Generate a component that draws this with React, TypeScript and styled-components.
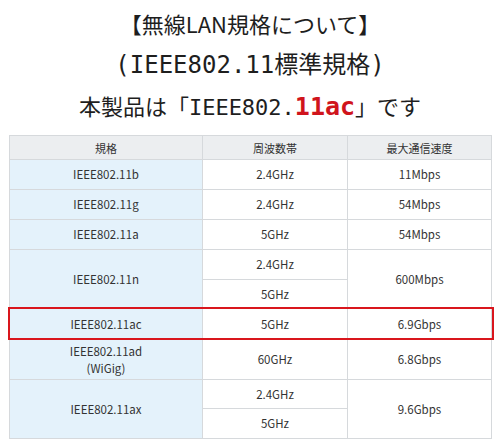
import styled, { createGlobalStyle } from 'styled-components'

const GlobalStyle = createGlobalStyle`
  body {
    margin: 0;
    background: #fff;
    font-family: "Noto Sans CJK JP", "Noto Sans", sans-serif;
    color: #222;
  }
`

const Page = styled.div`
  width: 500px;
  height: 448px;
  padding-top: 2px;
  box-sizing: border-box;
  overflow: hidden;
`

const Heading = styled.div<{ $size: number; $mono?: boolean }>`
  height: 42px;
  line-height: 42px;
  text-align: center;
  font-size: ${(p) => p.$size}px;
  font-family: ${(p) =>
    p.$mono
      ? '"DejaVu Sans Mono", "Noto Sans CJK JP", monospace'
      : '"Noto Sans CJK JP", sans-serif'};
  color: #1e1e1e;
  white-space: nowrap;
`

const Accent = styled.span`
  color: #d0141c;
  font-weight: 700;
  font-size: 25px;
`

const TableWrap = styled.div`
  position: relative;
  margin: 7px 0 0 9px;
  width: 482px;
`

const Table = styled.table`
  width: 482px;
  border-collapse: collapse;
  table-layout: fixed;
  font-size: 11.5px;
  color: #333;
`

const Row = styled.tr<{ $h: number }>`
  height: ${(p) => p.$h}px;
`

const Head = styled.th`
  background: #eceef0;
  border: 1px solid #d6d9dc;
  font-weight: 400;
  font-size: 11px;
  padding: 0;
  text-align: center;
`

const Cell = styled.td<{ $name?: boolean }>`
  background: ${(p) => (p.$name ? '#e4f2fb' : '#fff')};
  border: 1px solid #d6d9dc;
  padding: 0;
  text-align: center;
  line-height: 17px;
`

const Highlight = styled.div`
  position: absolute;
  left: -1px;
  top: 172px;
  width: 486px;
  height: 33px;
  border: 2px solid #d9161d;
  box-sizing: border-box;
  pointer-events: none;
`

export default function App() {
  return (
    <Page>
      <GlobalStyle />
      <Heading $size={22}>【無線LAN規格について】</Heading>
      <Heading $size={24} $mono>(IEEE802.11標準規格)</Heading>
      <Heading $size={22} $mono>
        本製品は「IEEE802.<Accent>11ac</Accent>」です
      </Heading>
      <TableWrap>
        <Table>
          <colgroup>
            <col style={{ width: 193 }} />
            <col style={{ width: 145 }} />
            <col style={{ width: 144 }} />
          </colgroup>
          <thead>
            <Row $h={24}>
              <Head>規格</Head>
              <Head>周波数帯</Head>
              <Head>最大通信速度</Head>
            </Row>
          </thead>
          <tbody>
            <Row $h={30}>
              <Cell $name>IEEE802.11b</Cell>
              <Cell>2.4GHz</Cell>
              <Cell>11Mbps</Cell>
            </Row>
            <Row $h={30}>
              <Cell $name>IEEE802.11g</Cell>
              <Cell>2.4GHz</Cell>
              <Cell>54Mbps</Cell>
            </Row>
            <Row $h={30}>
              <Cell $name>IEEE802.11a</Cell>
              <Cell>5GHz</Cell>
              <Cell>54Mbps</Cell>
            </Row>
            <Row $h={30}>
              <Cell $name rowSpan={2}>IEEE802.11n</Cell>
              <Cell>2.4GHz</Cell>
              <Cell rowSpan={2}>600Mbps</Cell>
            </Row>
            <Row $h={29}>
              <Cell>5GHz</Cell>
            </Row>
            <Row $h={31}>
              <Cell $name>IEEE802.11ac</Cell>
              <Cell>5GHz</Cell>
              <Cell>6.9Gbps</Cell>
            </Row>
            <Row $h={40}>
              <Cell $name>
                IEEE802.11ad
                <br />
                (WiGig)
              </Cell>
              <Cell>60GHz</Cell>
              <Cell>6.8Gbps</Cell>
            </Row>
            <Row $h={29}>
              <Cell $name rowSpan={2}>IEEE802.11ax</Cell>
              <Cell>2.4GHz</Cell>
              <Cell rowSpan={2}>9.6Gbps</Cell>
            </Row>
            <Row $h={30}>
              <Cell>5GHz</Cell>
            </Row>
          </tbody>
        </Table>
        <Highlight />
      </TableWrap>
    </Page>
  )
}
